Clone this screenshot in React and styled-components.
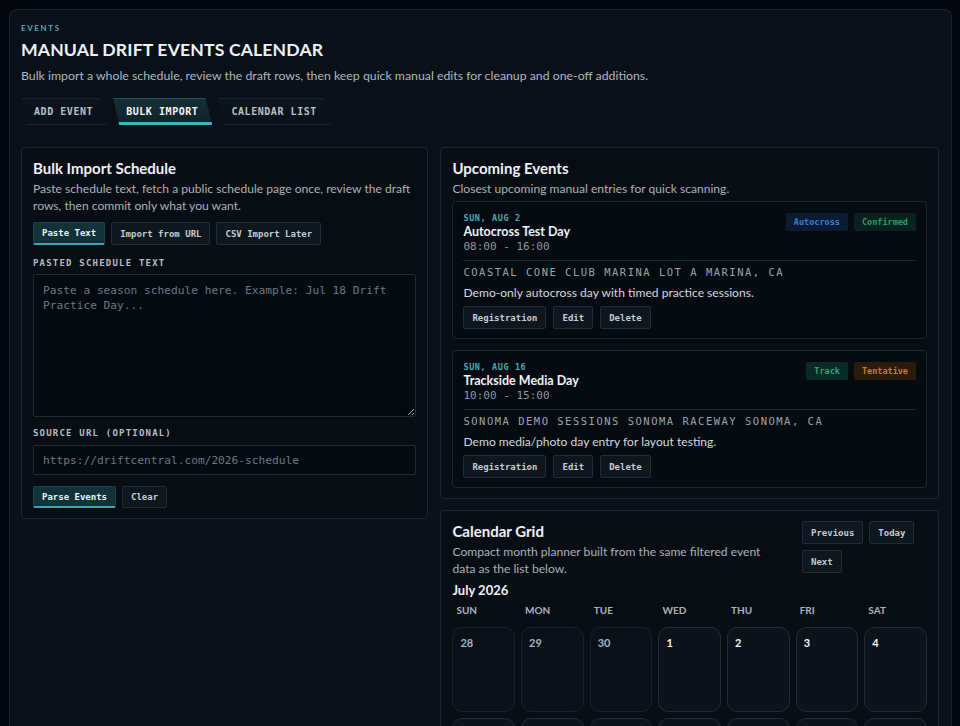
import React from 'react';
import styled, { createGlobalStyle, css } from 'styled-components';

const SANS = `Lato, "Noto Sans", sans-serif`;
const MONO = `"DejaVu Sans Mono", "Liberation Mono", monospace`;

const GlobalStyle = createGlobalStyle`
  html, body { margin: 0; padding: 0; background: #04070b; }
  body { font-family: ${SANS}; color: #e8edf2; }
  * { box-sizing: border-box; }
`;

const Page = styled.div`
  padding: 9px 8px 0 9px;
`;

const Shell = styled.div`
  border: 1px solid #1a232d;
  border-bottom: none;
  border-radius: 8px 8px 0 0;
  background: linear-gradient(180deg, #0a1018 0%, #09101a 100%);
  padding: 13px 12px 20px 11px;
  min-height: 717px;
`;

const Eyebrow = styled.div`
  font-size: 8px;
  line-height: 10px;
  font-weight: 700;
  letter-spacing: 1.6px;
  color: #4aa9b6;
  text-transform: uppercase;
`;

const Title = styled.h1`
  margin: 5px 0 0;
  font-size: 17.6px;
  line-height: 24px;
  font-weight: 700;
  letter-spacing: 0.15px;
  color: #eef2f6;
  text-transform: uppercase;
`;

const Subtitle = styled.p`
  margin: 5px 0 0;
  font-size: 12.3px;
  line-height: 18px;
  color: #aeb7c0;
`;

const Tabs = styled.div`
  display: flex;
  gap: 6px;
  margin-top: 13px;
`;

const Tab = styled.div`
  height: 27px;
  padding: 0 14px 0 13px;
  display: flex;
  align-items: center;
  font-family: ${MONO};
  font-size: 10px;
  font-weight: 700;
  letter-spacing: 0.55px;
  clip-path: polygon(0 0, calc(100% - 7px) 0, 100% 100%, 6px 100%);
  ${(p) =>
    p.$active
      ? css`
          color: #f2f7f9;
          background: linear-gradient(180deg, #163039 0%, #0f2029 100%);
          box-shadow: inset 0 1px 0 #2d4f5a, inset 0 -3px 0 #3fb0bf;
        `
      : css`
          color: #b7c1ca;
          background: linear-gradient(180deg, #0c141c 0%, #0a1118 100%);
          box-shadow: inset 0 1px 0 #19232d, inset 0 -1px 0 #19232d;
        `}
`;

const Columns = styled.div`
  display: grid;
  grid-template-columns: minmax(0, 407fr) minmax(0, 498fr);
  gap: 12px;
  align-items: start;
  margin-top: 22px;
`;

const Stack = styled.div`
  display: flex;
  flex-direction: column;
  gap: 11px;
`;

const Panel = styled.section`
  border: 1px solid #1b2530;
  border-radius: 4px;
  background: #080d14;
  padding: 10px 11px 10px;
`;

const PanelTitle = styled.h2`
  margin: 0;
  font-size: 15px;
  line-height: 20px;
  font-weight: 700;
  color: #eef2f6;
`;

const PanelDesc = styled.p`
  margin: 2px 0 0;
  font-size: 12.1px;
  line-height: 17px;
  color: #a9b2bb;
`;

const CalDesc = styled(PanelDesc)`
  max-width: 318px;
`;

const ButtonRow = styled.div`
  display: flex;
  flex-wrap: wrap;
  gap: ${(p) => p.$gap || 6}px;
  margin-top: ${(p) => p.$mt || 0}px;
`;

const Button = styled.button`
  height: ${(p) => p.$h || 23}px;
  padding: 0 8px;
  border: 1px solid #212c37;
  border-radius: 2px;
  background: #0e161e;
  color: #c4ccd4;
  font-family: ${MONO};
  font-size: 9px;
  font-weight: 700;
  cursor: pointer;
  ${(p) =>
    p.$primary &&
    css`
      background: #123239;
      border-color: #1c4148;
      border-bottom: 2px solid #3aa6b3;
      color: #eaf5f7;
    `}
`;

const FieldLabel = styled.label`
  display: block;
  margin-top: ${(p) => p.$mt || 0}px;
  font-family: ${MONO};
  font-size: 9px;
  line-height: 11px;
  font-weight: 700;
  letter-spacing: 1.2px;
  color: #b3bcc5;
  text-transform: uppercase;
`;

const fieldBase = css`
  display: block;
  width: 100%;
  border: 1px solid #1e2a35;
  border-radius: 2px;
  background: #050a10;
  color: #d0d7de;
  font-family: ${MONO};
  font-size: 11.2px;
  outline: none;
  &::placeholder {
    color: #6d7884;
  }
`;

const TextArea = styled.textarea`
  ${fieldBase};
  height: 143px;
  margin-top: 5px;
  padding: 8px 9px;
  line-height: 15px;
  resize: vertical;
`;

const Input = styled.input`
  ${fieldBase};
  height: 30px;
  margin-top: 6px;
  padding: 0 9px;
`;

const Card = styled.article`
  border: 1px solid #1c2630;
  border-radius: 4px;
  background: #060b11;
  padding: 11px 10px 9px 10px;
  margin-top: ${(p) => p.$mt || 0}px;
`;

const CardTop = styled.div`
  display: flex;
  justify-content: space-between;
  align-items: flex-start;
`;

const DateLine = styled.div`
  font-family: ${MONO};
  font-size: 8.5px;
  line-height: 11px;
  font-weight: 700;
  letter-spacing: 0.6px;
  color: #4aa9b6;
  text-transform: uppercase;
`;

const EventName = styled.div`
  font-size: 12.5px;
  line-height: 16px;
  font-weight: 700;
  color: #eef2f6;
`;

const TimeLine = styled.div`
  font-family: ${MONO};
  font-size: 11px;
  line-height: 14px;
  color: #8c97a3;
`;

const Badges = styled.div`
  display: flex;
  gap: 6px;
`;

const badgeTones = {
  blue: css`color: #3a7dd3; background: #0b1c31;`,
  green: css`color: #2b9a6c; background: #0a221f;`,
  teal: css`color: #2ba27c; background: #0a2a25;`,
  orange: css`color: #c27e2c; background: #2a1c0d;`,
};

const Badge = styled.span`
  height: 18px;
  padding: 0 8px;
  display: inline-flex;
  align-items: center;
  border-radius: 2px;
  font-family: ${MONO};
  font-size: 8.5px;
  font-weight: 700;
  ${(p) => badgeTones[p.$tone]}
`;

const Divider = styled.hr`
  margin: 6px 0 0;
  border: none;
  border-top: 1px solid #1e2832;
`;

const Location = styled.div`
  margin-top: 4px;
  font-family: ${MONO};
  font-size: 10.5px;
  line-height: 14px;
  letter-spacing: 1.5px;
  color: #9aa4ae;
  text-transform: uppercase;
`;

const EventDesc = styled.p`
  margin: 5px 0 0;
  font-size: 12.1px;
  line-height: 18px;
  color: #d3d9df;
`;

const CalHeader = styled.div`
  display: flex;
  justify-content: space-between;
  gap: 12px;
`;

const CalIntro = styled.div`
  flex: 1;
  min-width: 0;
`;

const NavButtons = styled.div`
  width: 125px;
  flex: none;
  display: flex;
  flex-wrap: wrap;
  gap: 6px;
  align-content: flex-start;
`;

const MonthTitle = styled.div`
  margin-top: 4px;
  font-size: 13px;
  line-height: 18px;
  font-weight: 700;
  color: #eef2f6;
`;

const WeekGrid = styled.div`
  display: grid;
  grid-template-columns: repeat(7, minmax(0, 1fr));
  column-gap: 6px;
  row-gap: 6px;
  margin-top: ${(p) => p.$mt || 0}px;
`;

const WeekDay = styled.div`
  padding-left: 4px;
  font-size: 10px;
  line-height: 13px;
  font-weight: 700;
  color: #aab3bd;
  text-transform: uppercase;
`;

const DayCell = styled.div`
  height: 85px;
  border-radius: 10px;
  padding: 8px 0 0 7px;
  font-size: 11px;
  line-height: 14px;
  font-weight: 700;
  ${(p) =>
    p.$muted
      ? css`
          border: 1px solid #18212b;
          background: #0a1018;
          color: #a7b0ba;
        `
      : css`
          border: 1px solid #212c37;
          background: #0c131b;
          color: #f1f4f7;
        `}
`;

const events = [
  {
    date: 'Sun, Aug 2',
    name: 'Autocross Test Day',
    time: '08:00 - 16:00',
    badges: [
      ['Autocross', 'blue'],
      ['Confirmed', 'green'],
    ],
    location: 'Coastal Cone Club Marina Lot A Marina, CA',
    desc: 'Demo-only autocross day with timed practice sessions.',
  },
  {
    date: 'Sun, Aug 16',
    name: 'Trackside Media Day',
    time: '10:00 - 15:00',
    badges: [
      ['Track', 'teal'],
      ['Tentative', 'orange'],
    ],
    location: 'Sonoma Demo Sessions Sonoma Raceway Sonoma, CA',
    desc: 'Demo media/photo day entry for layout testing.',
  },
];

const weekdays = ['Sun', 'Mon', 'Tue', 'Wed', 'Thu', 'Fri', 'Sat'];

const days = [
  ...[28, 29, 30].map((d) => ({ d, muted: true })),
  ...Array.from({ length: 31 }, (_, i) => ({ d: i + 1, muted: false })),
  { d: 1, muted: true },
];

export default function App() {
  return (
    <>
      <GlobalStyle />
      <Page>
        <Shell>
          <Eyebrow>Events</Eyebrow>
          <Title>Manual Drift Events Calendar</Title>
          <Subtitle>
            Bulk import a whole schedule, review the draft rows, then keep quick manual edits for
            cleanup and one-off additions.
          </Subtitle>
          <Tabs>
            <Tab>ADD EVENT</Tab>
            <Tab $active>BULK IMPORT</Tab>
            <Tab>CALENDAR LIST</Tab>
          </Tabs>

          <Columns>
            <Stack>
              <Panel>
                <PanelTitle>Bulk Import Schedule</PanelTitle>
                <PanelDesc>
                  Paste schedule text, fetch a public schedule page once, review the draft rows,
                  then commit only what you want.
                </PanelDesc>
                <ButtonRow $mt={8}>
                  <Button $primary>Paste Text</Button>
                  <Button>Import from URL</Button>
                  <Button>CSV Import Later</Button>
                </ButtonRow>
                <FieldLabel $mt={13}>Pasted schedule text</FieldLabel>
                <TextArea placeholder="Paste a season schedule here. Example: Jul 18 Drift Practice Day..." />
                <FieldLabel $mt={11}>Source URL (optional)</FieldLabel>
                <Input placeholder="https://driftcentral.com/2026-schedule" />
                <ButtonRow $mt={11}>
                  <Button $primary $h={22}>Parse Events</Button>
                  <Button $h={22}>Clear</Button>
                </ButtonRow>
              </Panel>
            </Stack>

            <Stack>
              <Panel>
                <PanelTitle>Upcoming Events</PanelTitle>
                <PanelDesc>Closest upcoming manual entries for quick scanning.</PanelDesc>
                {events.map((ev, i) => (
                  <Card key={ev.name} $mt={i === 0 ? 4 : 11}>
                    <CardTop>
                      <div>
                        <DateLine>{ev.date}</DateLine>
                        <EventName>{ev.name}</EventName>
                        <TimeLine>{ev.time}</TimeLine>
                      </div>
                      <Badges>
                        {ev.badges.map(([label, tone]) => (
                          <Badge key={label} $tone={tone}>
                            {label}
                          </Badge>
                        ))}
                      </Badges>
                    </CardTop>
                    <Divider />
                    <Location>{ev.location}</Location>
                    <EventDesc>{ev.desc}</EventDesc>
                    <ButtonRow $mt={4} $gap={7}>
                      <Button>Registration</Button>
                      <Button>Edit</Button>
                      <Button>Delete</Button>
                    </ButtonRow>
                  </Card>
                ))}
              </Panel>

              <Panel>
                <CalHeader>
                  <CalIntro>
                    <PanelTitle>Calendar Grid</PanelTitle>
                    <CalDesc>
                      Compact month planner built from the same filtered event data as the list
                      below.
                    </CalDesc>
                  </CalIntro>
                  <NavButtons>
                    <Button>Previous</Button>
                    <Button>Today</Button>
                    <Button>Next</Button>
                  </NavButtons>
                </CalHeader>
                <MonthTitle>July 2026</MonthTitle>
                <WeekGrid $mt={5}>
                  {weekdays.map((w) => (
                    <WeekDay key={w}>{w}</WeekDay>
                  ))}
                </WeekGrid>
                <WeekGrid $mt={10}>
                  {days.map((day, i) => (
                    <DayCell key={i} $muted={day.muted}>
                      {day.d}
                    </DayCell>
                  ))}
                </WeekGrid>
              </Panel>
            </Stack>
          </Columns>
        </Shell>
      </Page>
    </>
  );
}
